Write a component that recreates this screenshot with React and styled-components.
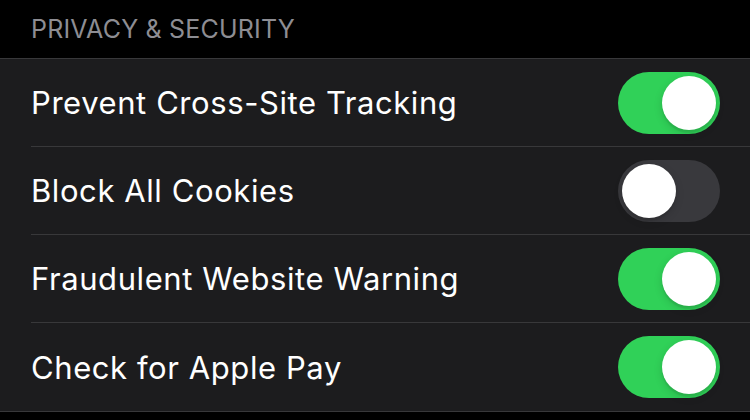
import styled, { createGlobalStyle } from "styled-components";

const GlobalStyle = createGlobalStyle`
    body {
        margin: 0;
        background: #000000;
        font-family: Inter, "Noto Sans", sans-serif;
        -webkit-font-smoothing: antialiased;
    }
`

const Page = styled.div`
    width: 750px;
    height: 420px;
    background: #000000;
    overflow: hidden;
`
const SectionTitle = styled.div`
    height: 58px;
    box-sizing: border-box;
    padding: 14px 0 0 31px;
    font-size: 25px;
    line-height: 30px;
    color: #8d8d93;
    letter-spacing: 0.2px;
`
const Group = styled.ul`
    margin: 0;
    padding: 0;
    list-style: none;
    background: #1c1c1e;
    border-top: 1px solid #38383a;
    border-bottom: 1px solid #38383a;
`
const Row = styled.li`
    display: flex;
    align-items: center;
    justify-content: space-between;
    height: 88px;
    margin-left: 31px;
    padding-right: 30px;
    box-sizing: border-box;
    border-bottom: ${props => (props.$last ? "none" : "1px solid #38383a")};
`
const Label = styled.span`
    font-size: 31px;
    color: #ffffff;
    letter-spacing: 0.58px;
`
const Track = styled.div`
    position: relative;
    width: 102px;
    height: 62px;
    border-radius: 31px;
    background: ${props => (props.$on ? "#30d158" : "#39393d")};
`
const Knob = styled.div`
    position: absolute;
    top: 4px;
    left: ${props => (props.$on ? "44px" : "4px")};
    width: 54px;
    height: 54px;
    border-radius: 50%;
    background: #ffffff;
    box-shadow: 0 3px 8px rgba(0, 0, 0, 0.15), 0 3px 1px rgba(0, 0, 0, 0.06);
`

function Toggle({ on }) {
    return (
        <Track $on={on}>
            <Knob $on={on} />
        </Track>
    )
}

const settings = [
    { id: 1, label: "Prevent Cross-Site Tracking", on: true },
    { id: 2, label: "Block All Cookies", on: false },
    { id: 3, label: "Fraudulent Website Warning", on: true },
    { id: 4, label: "Check for Apple Pay", on: true },
]

function App() {
    return (
        <Page>
            <GlobalStyle />
            <SectionTitle>PRIVACY &amp; SECURITY</SectionTitle>
            <Group>
                {settings.map((item, i) => (
                    <Row key={item.id} $last={i === settings.length - 1}>
                        <Label>{item.label}</Label>
                        <Toggle on={item.on} />
                    </Row>
                ))}
            </Group>
        </Page>
    )
}

export default App
